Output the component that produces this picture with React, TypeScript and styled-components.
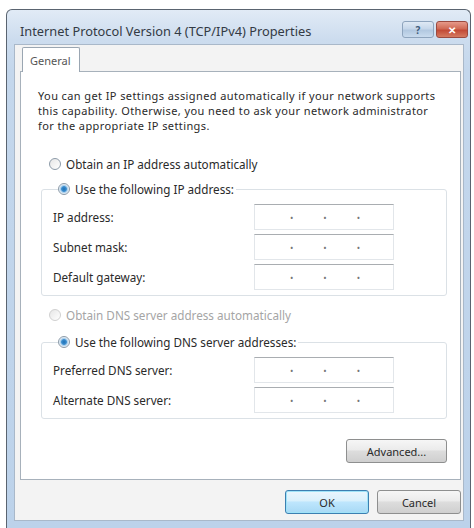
import { Fragment } from "react";
import styled, { createGlobalStyle } from "styled-components";

const GlobalStyle = createGlobalStyle`
  html, body {
    margin: 0;
    padding: 0;
    background: #ffffff;
  }
  body {
    font-family: "Noto Sans", "Open Sans", sans-serif;
    font-size: 11.7px;
    color: #2a2a2a;
  }
`;

const Window = styled.div`
  margin: 9px 0 0 6px;
  width: 465px;
  height: 519px;
  box-sizing: border-box;
  border: 1px solid #5a6470;
  border-bottom: none;
  border-radius: 6px 6px 0 0;
  background: linear-gradient(180deg, #e1ebf6 0%, #ccdcee 30px, #c4d7ec 60px, #bcd2ea 100%);
  display: flex;
  flex-direction: column;
`;

const TitleBar = styled.div`
  height: 34px;
  box-sizing: border-box;
  display: flex;
  align-items: center;
  padding: 8px 2px 0 13px;
`;

const Title = styled.div`
  flex: 1;
  font-size: 12.8px;
  color: #333a44;
`;

const CaptionButton = styled.div<{ $close?: boolean }>`
  width: 30px;
  height: 15px;
  margin-top: -3px;
  border: 1px solid ${(p) => (p.$close ? "#9b4a40" : "#8ea4bd")};
  border-radius: 3px;
  background: ${(p) =>
    p.$close
      ? "linear-gradient(180deg, #e69a8a 0%, #d06a55 45%, #c24a36 55%, #d57a60 100%)"
      : "linear-gradient(180deg, #dfe9f4 0%, #c6d7ea 45%, #b2c8e0 55%, #c9dbee 100%)"};
  color: ${(p) => (p.$close ? "#ffffff" : "#3f5a7a")};
  font-size: 10px;
  font-weight: bold;
  display: flex;
  align-items: center;
  justify-content: center;
  margin-left: 2px;
`;

const Client = styled.div`
  flex: 1;
  margin: 0 6px 7px 7px;
  background: #f3f3f3;
  border: 1px solid #a9b8c9;
  display: flex;
  flex-direction: column;
  padding: 2px 2px 0 5px;
`;

const TabStrip = styled.div`
  display: flex;
  padding-left: 2px;
`;

const Tab = styled.div`
  width: 58px;
  height: 25px;
  box-sizing: border-box;
  border: 1px solid #9aa6b2;
  border-bottom: none;
  border-radius: 2px 2px 0 0;
  background: #ffffff;
  display: flex;
  align-items: center;
  padding-left: 7px;
  margin-bottom: -1px;
  position: relative;
  z-index: 1;
  color: #555;
  font-size: 11px;
`;

const Panel = styled.div`
  background: #ffffff;
  border: 1px solid #a7b1bb;
  padding: 16px 13px 16px 17px;
  display: flex;
  flex-direction: column;
`;

const Intro = styled.p`
  margin: 0;
  font-size: 11px;
  line-height: 15px;
  letter-spacing: 0.4px;
  white-space: nowrap;
`;

const RadioRow = styled.label<{ $disabled?: boolean; $gap?: number }>`
  display: flex;
  align-items: center;
  height: 14px;
  gap: 5px;
  color: ${(p) => (p.$disabled ? "#a5a5a5" : "inherit")};
  margin: ${(p) => p.$gap ?? 0}px 0 0 11px;
`;

const RadioDot = styled.span<{ $checked?: boolean; $disabled?: boolean }>`
  width: 10px;
  height: 10px;
  border-radius: 50%;
  border: 1px solid ${(p) => (p.$disabled ? "#d0d0d0" : "#8c9aa8")};
  background: ${(p) =>
    p.$checked
      ? "radial-gradient(circle, #1f6fb4 0%, #3c8fd0 35%, #9cc6e8 45%, #f0f6fb 70%)"
      : "linear-gradient(135deg, #e6e6e6, #ffffff)"};
  flex-shrink: 0;
`;

const Group = styled.fieldset<{ $top: number }>`
  margin: ${(p) => p.$top}px 0 0 3px;
  width: 406px;
  box-sizing: border-box;
  border: 1px solid #dbe1e6;
  border-radius: 3px;
  padding: 8px 0 5px 11px;
  display: grid;
  grid-template-columns: 201px 140px;
  row-gap: 4px;
  align-items: center;
`;

const Legend = styled.legend`
  padding: 0 2px 0 0;
  margin-left: 5px;
  & > label {
    margin-left: 0;
  }
`;

const FieldLabel = styled.span``;

const IpField = styled.div`
  height: 26px;
  box-sizing: border-box;
  border: 1px solid #e2e6ea;
  border-top-color: #a9adb1;
  display: flex;
  align-items: center;
  justify-content: center;
  gap: 30px;
  padding-left: 2px;
  color: #777;
  font-size: 9px;
`;

const ButtonBase = styled.button`
  font-family: inherit;
  font-size: 11px;
  color: #2a2a2a;
  height: 24px;
  border-radius: 3px;
  border: 1px solid #8e8f8f;
  background: linear-gradient(180deg, #f6f6f6 0%, #ebebeb 45%, #dddddd 50%, #cfcfcf 100%);
  padding: 0;
`;

const AdvancedButton = styled(ButtonBase)`
  width: 101px;
  align-self: flex-end;
  margin-top: 20px;
`;

const Footer = styled.div`
  display: flex;
  justify-content: flex-end;
  gap: 8px;
  padding: 10px 0 0;
`;

const DialogButton = styled(ButtonBase)<{ $default?: boolean }>`
  width: 84px;
  border-color: ${(p) => (p.$default ? "#3c7fb1" : "#8e8f8f")};
  box-shadow: ${(p) => (p.$default ? "inset 0 0 0 1px #9fe3f8" : "none")};
  background: ${(p) =>
    p.$default
      ? "linear-gradient(180deg, #eaf6fd 0%, #d9f0fc 45%, #bee6fd 50%, #a7d9f5 100%)"
      : "linear-gradient(180deg, #f6f6f6 0%, #ebebeb 45%, #dddddd 50%, #cfcfcf 100%)"};
`;

const Dots = () => (
  <>
    <span>•</span>
    <span>•</span>
    <span>•</span>
  </>
);

const ipRows = ["IP address:", "Subnet mask:", "Default gateway:"];
const dnsRows = ["Preferred DNS server:", "Alternate DNS server:"];

const FieldRows = ({ rows }: { rows: string[] }) => (
  <>
    {rows.map((label) => (
      <Fragment key={label}>
        <FieldLabel>{label}</FieldLabel>
        <IpField>
          <Dots />
        </IpField>
      </Fragment>
    ))}
  </>
);

const App = () => {
  return (
    <>
      <GlobalStyle />
      <Window>
        <TitleBar>
          <Title>Internet Protocol Version 4 (TCP/IPv4) Properties</Title>
          <CaptionButton>?</CaptionButton>
          <CaptionButton $close>✕</CaptionButton>
        </TitleBar>
        <Client>
          <TabStrip>
            <Tab>General</Tab>
          </TabStrip>
          <Panel>
            <Intro>
              You can get IP settings assigned automatically if your network supports
              <br />
              this capability. Otherwise, you need to ask your network administrator
              <br />
              for the appropriate IP settings.
            </Intro>
            <RadioRow $gap={24}>
              <RadioDot />
              Obtain an IP address automatically
            </RadioRow>
            <Group $top={11}>
              <Legend>
                <RadioRow>
                  <RadioDot $checked />
                  Use the following IP address:
                </RadioRow>
              </Legend>
              <FieldRows rows={ipRows} />
            </Group>
            <RadioRow $disabled $gap={12}>
              <RadioDot $disabled />
              Obtain DNS server address automatically
            </RadioRow>
            <Group $top={13}>
              <Legend>
                <RadioRow>
                  <RadioDot $checked />
                  Use the following DNS server addresses:
                </RadioRow>
              </Legend>
              <FieldRows rows={dnsRows} />
            </Group>
            <AdvancedButton>Advanced...</AdvancedButton>
          </Panel>
          <Footer>
            <DialogButton $default>OK</DialogButton>
            <DialogButton>Cancel</DialogButton>
          </Footer>
        </Client>
      </Window>
    </>
  );
};

export default App;
